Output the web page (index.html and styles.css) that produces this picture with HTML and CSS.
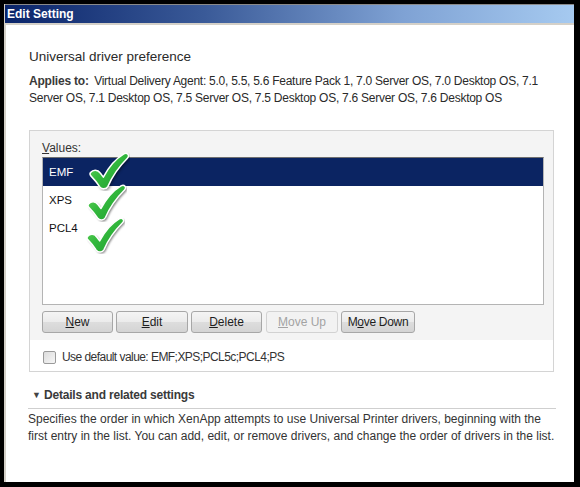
FILE: index.html
```html
<!DOCTYPE html>
<html>
<head>
<meta charset="utf-8">
<title>Edit Setting</title>
<link rel="stylesheet" href="styles.css">
</head>
<body>
<div class="window">
  <div class="titlebar">Edit Setting</div>
  <div class="content">
    <h1 class="heading">Universal driver preference</h1>
    <p class="applies"><span class="label">Applies to:</span> <span class="applies-list">Virtual Delivery Agent: 5.0, 5.5, 5.6 Feature Pack 1, 7.0 Server OS, 7.0 Desktop OS, 7.1<br>Server OS, 7.1 Desktop OS, 7.5 Server OS, 7.5 Desktop OS, 7.6 Server OS, 7.6 Desktop OS</span></p>
    <div class="panel">
      <div class="panel-main">
        <div class="values-label"><u>V</u>alues:</div>
        <div class="listbox">
          <div class="item selected">EMF</div>
          <div class="item">XPS</div>
          <div class="item">PCL4</div>
          <svg class="check c1" viewBox="0 0 40 38" width="41" height="39"><use href="#tick"/></svg>
          <svg class="check c2" viewBox="0 0 40 38" width="40" height="38"><use href="#tick"/></svg>
          <svg class="check c3" viewBox="0 0 40 38" width="39" height="37"><use href="#tick"/></svg>
        </div>
        <div class="buttons">
          <button class="btn b-new"><u>N</u>ew</button>
          <button class="btn b-edit"><u>E</u>dit</button>
          <button class="btn b-del"><u>D</u>elete</button>
          <button class="btn b-up disabled"><u>M</u>ove Up</button>
          <button class="btn b-down">M<u>o</u>ve Down</button>
        </div>
      </div>
      <div class="panel-foot">
        <span class="checkbox"></span>
        <span class="foot-text">Use default value: EMF;XPS;PCL5c;PCL4;PS</span>
      </div>
    </div>
    <div class="details"><span class="tri">&#9660;</span><span class="details-text">Details and related settings</span></div>
    <p class="desc">Specifies the order in which XenApp attempts to use Universal Printer drivers, beginning with the<br>first entry in the list. You can add, edit, or remove drivers, and change the order of drivers in the list.</p>
  </div>
</div>
<svg class="defs" width="0" height="0">
  <defs>
    <filter id="blur" x="-20%" y="-20%" width="140%" height="140%"><feGaussianBlur stdDeviation="1.3"/></filter>
    <linearGradient id="g" x1="0" y1="0" x2="1" y2="1">
      <stop offset="0" stop-color="#6fdc62"/>
      <stop offset="0.45" stop-color="#33b83d"/>
      <stop offset="1" stop-color="#1e9c2d"/>
    </linearGradient>
    <g id="tick">
      <path d="M1.5 20 C4 17 8.5 17 11 20.5 L14 24.5 C19.5 14 27 6 34 1.8 C37.5 0 40 3.5 37.5 6 C30 13.5 23 23 18.5 33.5 C17 36.5 12.5 36.8 10.5 34 C7.5 29.5 4.5 26 2 23.5 C1 22.5 0.8 21 1.5 20 Z" transform="translate(1.5 1.5)" fill="#000" opacity="0.5" filter="url(#blur)"/>
      <path d="M1.5 20 C4 17 8.5 17 11 20.5 L14 24.5 C19.5 14 27 6 34 1.8 C37.5 0 40 3.5 37.5 6 C30 13.5 23 23 18.5 33.5 C17 36.5 12.5 36.8 10.5 34 C7.5 29.5 4.5 26 2 23.5 C1 22.5 0.8 21 1.5 20 Z" fill="url(#g)" stroke="#ffffff" stroke-width="1.5" stroke-linejoin="round"/>
    </g>
  </defs>
</svg>
</body>
</html>
```
FILE: styles.css
```css
html, body {
  margin: 0;
  padding: 0;
  background: #000;
}
body {
  width: 580px;
  height: 487px;
  overflow: hidden;
  font-family: "Liberation Sans", Arial, sans-serif;
  font-size: 12px;
  color: #1e1e1e;
}
.window {
  margin: 4px 0 0 4px;
  width: 570px;
  height: 478px;
  background: #fff;
  border-left: 2px solid #d4d0c8;
  box-sizing: border-box;
  display: flex;
  flex-direction: column;
}
.titlebar {
  margin-left: -1px;
  height: 21px;
  box-sizing: border-box;
  border-top: 1px solid #8a8a8a;
  border-bottom: 2px solid #d4d0c8;
  background: linear-gradient(to right, #0a246a 0%, #3a5a98 35%, #7fa2d4 70%, #a6caf0 100%);
  color: #fff;
  font-weight: bold;
  font-size: 12px;
  line-height: 18px;
  padding-left: 2px;
}
.content {
  padding: 23px 17px 0 23px;
}
.heading {
  margin: 0;
  font-size: 13.5px;
  font-weight: normal;
  line-height: 18px;
  color: #2a2a2a;
}
.applies {
  margin: 7px 0 0;
  line-height: 17px;
  white-space: nowrap;
  color: #2a2a2a;
}
.label {
  font-weight: bold;
  color: #3a3a3a;
  letter-spacing: -0.2px;
}
.applies-list {
  margin-left: 2px;
  letter-spacing: -0.26px;
}
.panel {
  margin-top: 23px;
  width: 525px;
  box-sizing: border-box;
  border: 1px solid #d4d4d4;
}
.panel-main {
  background: #f4f4f4;
  padding: 9px 9px 7px 12px;
}
.values-label {
  line-height: 16px;
  color: #333;
}
.listbox {
  position: relative;
  margin-top: 1px;
  height: 148px;
  box-sizing: border-box;
  border: 1px solid #b4b4b4;
  border-top-color: #6f6f6f;
  background: #fff;
}
.item {
  height: 28px;
  line-height: 28px;
  padding-left: 6px;
  font-size: 11.5px;
  color: #111;
}
.item.selected {
  background: #0b2462;
  color: #fff;
}
.check {
  position: absolute;
}
.c1 { left: 46px; top: -6px; }
.c2 { left: 44px; top: 26px; }
.c3 { left: 43px; top: 59px; }
.buttons {
  display: flex;
  gap: 3px;
  margin-top: 6px;
}
.btn {
  height: 22px;
  width: 71px;
  padding: 0;
  box-sizing: border-box;
  border: 1px solid #a7a7a7;
  border-radius: 3px;
  background: linear-gradient(to bottom, #f4f4f4 0%, #ebebeb 50%, #dddddd 51%, #d4d4d4 100%);
  font-family: inherit;
  font-size: 12px;
  color: #1e1e1e;
}
.b-edit { width: 72px; }
.b-del { width: 71px; }
.b-up { width: 72px; margin-left: 1px; }
.b-down { width: 74px; letter-spacing: -0.3px; }
.btn.disabled {
  color: #a3a3a3;
  border-color: #d2d2d2;
  background: #f2f2f2;
}
.panel-foot {
  height: 31px;
  display: flex;
  align-items: center;
  padding-left: 13px;
  background: #fff;
}
.checkbox {
  width: 13px;
  height: 13px;
  box-sizing: border-box;
  border: 1px solid #9a9a9a;
  border-radius: 2px;
  background: linear-gradient(135deg, #dcdcdc, #f6f6f6);
  margin-right: 6px;
  margin-top: 3px;
}
.foot-text {
  margin-top: 3px;
  color: #333;
  letter-spacing: -0.55px;
}
.details {
  margin: 14px 0 0 -1px;
  width: 528px;
  height: 23px;
  box-sizing: border-box;
  border-bottom: 1px solid #cfcfcf;
  display: flex;
  align-items: center;
  padding-bottom: 4px;
}
.tri {
  font-size: 9px;
  color: #444;
  width: 16px;
  padding-left: 4px;
  box-sizing: border-box;
}
.details-text {
  font-weight: bold;
  color: #3a3a3a;
  letter-spacing: -0.2px;
}
.desc {
  margin: 2px 0 0 -1px;
  line-height: 17px;
  white-space: nowrap;
  color: #333;
}
.defs {
  position: absolute;
  width: 0;
  height: 0;
}
```
